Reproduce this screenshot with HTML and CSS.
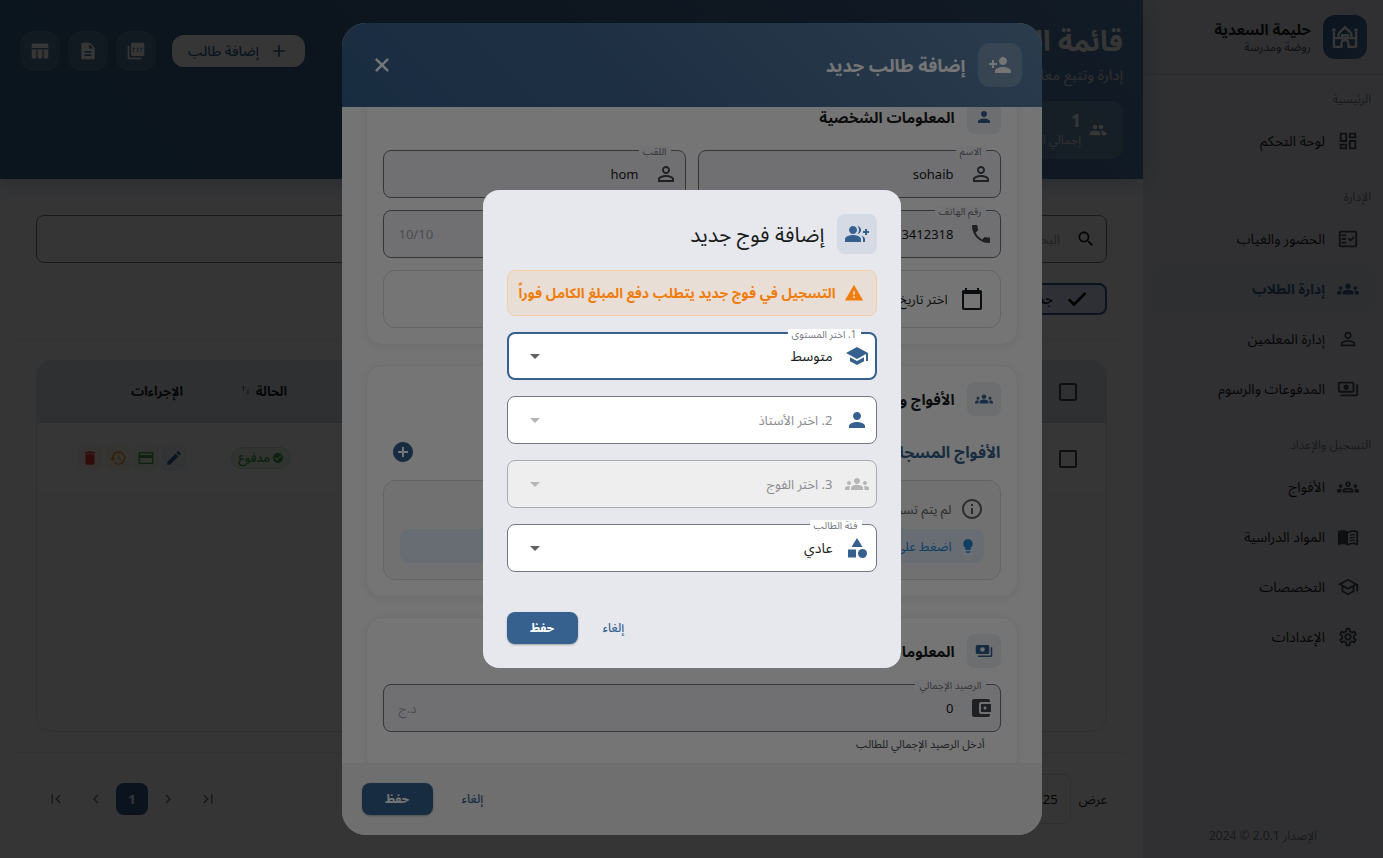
FILE: index.html
```html
<!DOCTYPE html>
<html lang="ar" dir="rtl">

<head>
  <meta charset="UTF-8">
  <meta name="viewport" content="width=device-width, initial-scale=1.0">
  <title>إدارة الطلاب</title>
  <link rel="stylesheet" href="styles.css">
</head>

<body>
  <!-- Icons -->
  <svg class="sprite" aria-hidden="true">
    <symbol id="i-person" viewBox="0 0 24 24"><path d="M12 12c2.21 0 4-1.79 4-4s-1.79-4-4-4-4 1.79-4 4 1.79 4 4 4zm0 2c-2.67 0-8 1.34-8 4v2h16v-2c0-2.66-5.33-4-8-4z"/></symbol>
    <symbol id="i-person-outline" viewBox="0 0 24 24"><path d="M12 5.9c1.16 0 2.1.94 2.1 2.1s-.94 2.1-2.1 2.1S9.9 9.16 9.9 8s.94-2.1 2.1-2.1m0 9c2.97 0 6.1 1.46 6.1 2.1v1.1H5.9V17c0-.64 3.13-2.1 6.1-2.1M12 4C9.79 4 8 5.79 8 8s1.79 4 4 4 4-1.79 4-4-1.79-4-4-4zm0 9c-2.67 0-8 1.34-8 4v3h16v-3c0-2.66-5.33-4-8-4z"/></symbol>
    <symbol id="i-person-add" viewBox="0 0 24 24"><path d="M15 12c2.21 0 4-1.79 4-4s-1.79-4-4-4-4 1.79-4 4 1.79 4 4 4zm-9-2V7H4v3H1v2h3v3h2v-3h3v-2H6zm9 4c-2.67 0-8 1.34-8 4v2h16v-2c0-2.66-5.33-4-8-4z"/></symbol>
    <symbol id="i-group-add" viewBox="0 0 24 24"><path d="M22 9V7h-2v2h-2v2h2v2h2v-2h2V9zM8 12c2.21 0 4-1.79 4-4s-1.79-4-4-4-4 1.79-4 4 1.79 4 4 4zm0 1c-2.67 0-8 1.34-8 4v3h16v-3c0-2.66-5.33-4-8-4zM12.51 4.05C13.43 5.11 14 6.49 14 8s-.57 2.89-1.49 3.95C14.47 11.7 16 10.04 16 8s-1.53-3.7-3.49-3.95zM16.53 13.83C17.42 14.66 18 15.7 18 17v3h2v-3c0-1.45-1.59-2.51-3.47-3.17z"/></symbol>
    <symbol id="i-people" viewBox="0 0 24 24"><path d="M16 11c1.66 0 2.99-1.34 2.99-3S17.66 5 16 5s-3 1.34-3 3 1.34 3 3 3zm-8 0c1.66 0 2.99-1.34 2.99-3S9.66 5 8 5 5 6.34 5 8s1.34 3 3 3zm0 2c-2.33 0-7 1.17-7 3.5V19h14v-2.5c0-2.33-4.67-3.5-7-3.5zm8 0c-.29 0-.62.02-.97.05 1.16.84 1.97 1.97 1.97 3.45V19h6v-2.5c0-2.33-4.67-3.5-7-3.5z"/></symbol>
    <symbol id="i-groups" viewBox="0 0 24 24"><path d="M12 12.75c1.63 0 3.07.39 4.24.9 1.08.48 1.76 1.56 1.76 2.73V18H6v-1.61c0-1.18.68-2.26 1.76-2.73 1.17-.52 2.61-.91 4.24-.91zM4 13c1.1 0 2-.9 2-2s-.9-2-2-2-2 .9-2 2 .9 2 2 2zm1.13 1.1c-.37-.06-.74-.1-1.13-.1-.99 0-1.93.21-2.78.58C.48 14.9 0 15.62 0 16.43V18h4.5v-1.61c0-.83.23-1.61.63-2.29zM20 13c1.1 0 2-.9 2-2s-.9-2-2-2-2 .9-2 2 .9 2 2 2zm4 3.43c0-.81-.48-1.53-1.22-1.85-.85-.37-1.79-.58-2.78-.58-.39 0-.76.04-1.13.1.4.68.63 1.46.63 2.29V18H24v-1.57zM12 6c1.66 0 3 1.34 3 3s-1.34 3-3 3-3-1.34-3-3 1.34-3 3-3z"/></symbol>
    <symbol id="i-groups-outline" viewBox="0 0 24 24"><path d="M4 13c1.1 0 2-.9 2-2s-.9-2-2-2-2 .9-2 2 .9 2 2 2zm1.13 1.1c-.37-.06-.74-.1-1.13-.1-.99 0-1.93.21-2.78.58C.48 14.9 0 15.62 0 16.43V18h4.5v-1.61c0-.83.23-1.61.63-2.29zM20 13c1.1 0 2-.9 2-2s-.9-2-2-2-2 .9-2 2 .9 2 2 2zm4 3.43c0-.81-.48-1.53-1.22-1.85-.85-.37-1.79-.58-2.78-.58-.39 0-.76.04-1.13.1.4.68.63 1.46.63 2.29V18H24v-1.57zm-7.76-2.78c-1.17-.52-2.61-.9-4.24-.9-1.63 0-3.07.39-4.24.9C6.68 14.13 6 15.21 6 16.39V18h12v-1.61c0-1.18-.68-2.26-1.76-2.74zM8.07 16c.09-.23.13-.39.91-.69.97-.38 1.99-.56 3.02-.56s2.05.18 3.02.56c.77.3.81.46.91.69H8.07zM12 8c.55 0 1 .45 1 1s-.45 1-1 1-1-.45-1-1 .45-1 1-1m0-2c-1.66 0-3 1.34-3 3s1.34 3 3 3 3-1.34 3-3-1.34-3-3-3z"/></symbol>
    <symbol id="i-warning" viewBox="0 0 24 24"><path d="M1 21h22L12 2 1 21zm12-3h-2v-2h2v2zm0-4h-2v-4h2v4z"/></symbol>
    <symbol id="i-school" viewBox="0 0 24 24"><path d="M5 13.18v4L12 21l7-3.82v-4L12 17l-7-3.82zM12 3 1 9l11 6 9-4.91V17h2V9L12 3z"/></symbol>
    <symbol id="i-school-outline" viewBox="0 0 24 24"><path d="M12 3 1 9l4 2.18v6L12 21l7-3.82v-6l2-1.09V17h2V9L12 3zm6.82 6L12 12.72 5.18 9 12 5.28 18.82 9zM17 15.99l-5 2.73-5-2.73v-3.72L12 15l5-2.73v3.72z"/></symbol>
    <symbol id="i-category" viewBox="0 0 24 24"><path d="m12 2-5.5 9h11zM3 13.5h8v8H3z"/><circle cx="17.5" cy="17.5" r="4.5"/></symbol>
    <symbol id="i-phone" viewBox="0 0 24 24"><path d="M6.62 10.79c1.44 2.83 3.76 5.14 6.59 6.59l2.2-2.2c.27-.27.67-.36 1.02-.24 1.12.37 2.33.57 3.57.57.55 0 1 .45 1 1V20c0 .55-.45 1-1 1-9.39 0-17-7.61-17-17 0-.55.45-1 1-1h3.5c.55 0 1 .45 1 1 0 1.25.2 2.45.57 3.57.11.35.03.74-.25 1.02l-2.2 2.2z"/></symbol>
    <symbol id="i-calendar" viewBox="0 0 24 24"><path d="M20 3h-1V1h-2v2H7V1H5v2H4c-1.1 0-2 .9-2 2v16c0 1.1.9 2 2 2h16c1.1 0 2-.9 2-2V5c0-1.1-.9-2-2-2zm0 18H4V7h16v14z"/></symbol>
    <symbol id="i-search" viewBox="0 0 24 24"><path d="M15.5 14h-.79l-.28-.27C15.41 12.59 16 11.11 16 9.5 16 5.91 13.09 3 9.5 3S3 5.91 3 9.5 5.91 16 9.5 16c1.61 0 3.09-.59 4.23-1.57l.27.28v.79l5 4.99L20.49 19l-4.99-5zm-6 0C7.01 14 5 11.99 5 9.5S7.01 5 9.5 5 14 7.01 14 9.5 11.99 14 9.5 14z"/></symbol>
    <symbol id="i-close" viewBox="0 0 24 24"><path d="M5.5 5.5l13 13m0-13l-13 13" fill="none" stroke="currentColor" stroke-width="3" stroke-linecap="round"/></symbol>
    <symbol id="i-add" viewBox="0 0 24 24"><path d="M19 13h-6v6h-2v-6H5v-2h6V5h2v6h6v2z"/></symbol>
    <symbol id="i-check" viewBox="0 0 24 24"><path d="M9 16.17 4.83 12l-1.42 1.41L9 19 21 7l-1.41-1.41z" stroke="currentColor"/></symbol>
    <symbol id="i-info" viewBox="0 0 24 24"><path d="M11 7h2v2h-2zm0 4h2v6h-2zm1-9C6.48 2 2 6.48 2 12s4.48 10 10 10 10-4.48 10-10S17.52 2 12 2zm0 18c-4.41 0-8-3.59-8-8s3.59-8 8-8 8 3.59 8 8-3.59 8-8 8z"/></symbol>
    <symbol id="i-bulb" viewBox="0 0 24 24"><path d="M9 21c0 .55.45 1 1 1h4c.55 0 1-.45 1-1v-1H9v1zm3-19C8.14 2 5 5.14 5 9c0 2.38 1.19 4.47 3 5.74V17c0 .55.45 1 1 1h6c.55 0 1-.45 1-1v-2.26c1.81-1.27 3-3.36 3-5.74 0-3.86-3.14-7-7-7z"/></symbol>
    <symbol id="i-payments" viewBox="0 0 24 24"><path d="M19 14V6c0-1.1-.9-2-2-2H3c-1.1 0-2 .9-2 2v8c0 1.1.9 2 2 2h14c1.1 0 2-.9 2-2zm-9-1c-1.66 0-3-1.34-3-3s1.34-3 3-3 3 1.34 3 3-1.34 3-3 3zm13-6v11c0 1.1-.9 2-2 2H4v-2h17V7h2z"/></symbol>
    <symbol id="i-payments-outline" viewBox="0 0 24 24"><path d="M19 14V6c0-1.1-.9-2-2-2H3c-1.1 0-2 .9-2 2v8c0 1.1.9 2 2 2h14c1.1 0 2-.9 2-2zm-2 0H3V6h14v8zm-7-7c-1.66 0-3 1.34-3 3s1.34 3 3 3 3-1.34 3-3-1.34-3-3-3zm13 0v11c0 1.1-.9 2-2 2H4v-2h17V7h2z"/></symbol>
    <symbol id="i-wallet" viewBox="0 0 24 24"><path d="M21 18v1c0 1.1-.9 2-2 2H5c-1.11 0-2-.9-2-2V5c0-1.1.89-2 2-2h14c1.1 0 2 .9 2 2v1h-9c-1.11 0-2 .9-2 2v8c0 1.1.89 2 2 2h9zm-9-2h10V8H12v8zm4-2.5c-.83 0-1.5-.67-1.5-1.5s.67-1.5 1.5-1.5 1.5.67 1.5 1.5-.67 1.5-1.5 1.5z"/></symbol>
    <symbol id="i-dashboard" viewBox="0 0 24 24"><path d="M19 5v2h-4V5h4M9 5v6H5V5h4m10 8v6h-4v-6h4M9 17v2H5v-2h4M21 3h-8v6h8V3zM11 3H3v10h8V3zm10 8h-8v10h8V11zm-10 4H3v6h8v-6z"/></symbol>
    <symbol id="i-fact-check" viewBox="0 0 24 24"><path d="M20 3H4c-1.1 0-2 .9-2 2v14c0 1.1.9 2 2 2h16c1.1 0 2-.9 2-2V5c0-1.1-.9-2-2-2zm0 16H4V5h16v14zM19.41 10.42 17.99 9l-3.17 3.17-1.41-1.42L12 12.16 14.82 15zM5 7h5v2H5zm0 4h5v2H5zm0 4h5v2H5z"/></symbol>
    <symbol id="i-book" viewBox="0 0 24 24"><path d="M21 5c-1.11-.35-2.33-.5-3.5-.5-1.95 0-4.05.4-5.5 1.5-1.45-1.1-3.55-1.5-5.5-1.5S2.45 4.9 1 6v14.65c0 .25.25.5.5.5.1 0 .15-.05.25-.05C3.1 20.45 5.05 20 6.5 20c1.95 0 4.05.4 5.5 1.5 1.35-.85 3.8-1.5 5.5-1.5 1.65 0 3.35.3 4.75 1.05.1.05.15.05.25.05.25 0 .5-.25.5-.5V6c-.6-.45-1.25-.75-2-1zm0 13.5c-1.1-.35-2.3-.5-3.5-.5-1.7 0-4.15.65-5.5 1.5V8c1.35-.85 3.8-1.5 5.5-1.5 1.2 0 2.4.15 3.5.5v11.5zM14 9.5c1.7-.8 3.7-.9 5.5-.6v1.3c-1.9-.3-3.9-.2-5.5.6zm0 3c1.7-.8 3.7-.9 5.5-.6v1.3c-1.9-.3-3.9-.2-5.5.6zm0 3c1.7-.8 3.7-.9 5.5-.6v1.3c-1.9-.3-3.9-.2-5.5.6z"/></symbol>
    <symbol id="i-settings" viewBox="0 0 24 24"><path d="M19.43 12.98c.04-.32.07-.64.07-.98 0-.34-.03-.66-.07-.98l2.11-1.65c.19-.15.24-.42.12-.64l-2-3.46c-.09-.16-.26-.25-.44-.25-.06 0-.12.01-.17.03l-2.49 1c-.52-.4-1.08-.73-1.69-.98l-.38-2.65C14.46 2.18 14.25 2 14 2h-4c-.25 0-.46.18-.49.42l-.38 2.65c-.61.25-1.17.59-1.69.98l-2.49-1c-.06-.02-.12-.03-.18-.03-.17 0-.34.09-.43.25l-2 3.46c-.13.22-.07.49.12.64l2.11 1.65c-.04.32-.07.65-.07.98 0 .33.03.66.07.98l-2.11 1.65c-.19.15-.24.42-.12.64l2 3.46c.09.16.26.25.44.25.06 0 .12-.01.17-.03l2.49-1c.52.4 1.08.73 1.69.98l.38 2.65c.03.24.24.42.49.42h4c.25 0 .46-.18.49-.42l.38-2.65c.61-.25 1.17-.59 1.69-.98l2.49 1c.06.02.12.03.18.03.17 0 .34-.09.43-.25l2-3.46c.12-.22.07-.49-.12-.64l-2.11-1.65zm-1.98-1.71c.04.31.05.52.05.73 0 .21-.02.43-.05.73l-.14 1.13.89.7 1.08.84-.7 1.21-1.27-.51-1.04-.42-.9.68c-.43.32-.84.56-1.25.73l-1.06.43-.16 1.13-.2 1.35h-1.4l-.19-1.35-.16-1.13-1.06-.43c-.43-.18-.83-.41-1.23-.71l-.91-.7-1.06.43-1.27.51-.7-1.21 1.08-.84.89-.7-.14-1.13c-.03-.31-.05-.54-.05-.74s.02-.43.05-.73l.14-1.13-.89-.7-1.08-.84.7-1.21 1.27.51 1.04.42.9-.68c.43-.32.84-.56 1.25-.73l1.06-.43.16-1.13.2-1.35h1.39l.19 1.35.16 1.13 1.06.43c.43.18.83.41 1.23.71l.91.7 1.06-.43 1.27-.51.7 1.21-1.07.85-.89.7.14 1.13zM12 8c-2.21 0-4 1.79-4 4s1.79 4 4 4 4-1.79 4-4-1.79-4-4-4zm0 6c-1.1 0-2-.9-2-2s.9-2 2-2 2 .9 2 2-.9 2-2 2z"/></symbol>
    <symbol id="i-mosque" viewBox="0 0 24 24"><path d="M2.5 21V7.5M21.5 21V7.5M2.5 20.5h6.5v-3c0-1.7 1.3-2.8 3-2.8s3 1.1 3 2.8v3h6.5M2.500 13h19M6.500 13V9.500C7.500 6.500 10.500 6 12 3.500c1.500 2.500 4.500 3 5.500 6V13M9.500 13v-2.500h5V13" fill="none" stroke="currentColor" stroke-width="2" stroke-linejoin="round"/><circle cx="2.500" cy="6" r="1.600"/><circle cx="21.500" cy="6" r="1.600"/></symbol>
    <symbol id="i-pdf" viewBox="0 0 24 24"><path fill-rule="evenodd" d="M20 2H8c-1.1 0-2 .9-2 2v12c0 1.1.9 2 2 2h12c1.1 0 2-.9 2-2V4c0-1.1-.9-2-2-2zM8 8h3v2H8zm5 0h2v2h-2zm4 0h3v2h-3zM8 11h1.5v2H8zm5 0h2v2h-2zm4 0h1.5v2H17zM4 6H2v14c0 1.1.9 2 2 2h14v-2H4V6z"/></symbol>
    <symbol id="i-doc" viewBox="0 0 24 24"><path d="M14 2H6c-1.1 0-1.99.9-1.99 2L4 20c0 1.1.89 2 1.99 2H18c1.1 0 2-.9 2-2V8l-6-6zm2 16H8v-2h8v2zm0-4H8v-2h8v2zm-3-5V3.5L18.5 9H13z"/></symbol>
    <symbol id="i-table" viewBox="0 0 24 24"><path d="M9 10h6v11H9zM16.5 21H20c1.1 0 2-.9 2-2v-9h-5.5v11zM20 3H4c-1.1 0-2 .9-2 2v3.5h20V5c0-1.1-.9-2-2-2zM2 19c0 1.1.9 2 2 2h3.5V10H2v9z"/></symbol>
    <symbol id="i-delete" viewBox="0 0 24 24"><path d="M6 19c0 1.1.9 2 2 2h8c1.1 0 2-.9 2-2V7H6v12zM19 4h-3.5l-1-1h-5l-1 1H5v2h14V4z"/></symbol>
    <symbol id="i-history" viewBox="0 0 24 24"><path d="M13 3c-4.97 0-9 4.03-9 9H1l3.89 3.89.07.14L9 12H6c0-3.87 3.13-7 7-7s7 3.13 7 7-3.13 7-7 7c-1.93 0-3.68-.79-4.94-2.06l-1.42 1.42C8.27 19.99 10.51 21 13 21c4.97 0 9-4.03 9-9s-4.03-9-9-9zm-1 5v5l4.28 2.54.72-1.21-3.5-2.08V8H12z"/></symbol>
    <symbol id="i-card" viewBox="0 0 24 24"><path d="M20 4H4c-1.11 0-1.99.89-1.99 2L2 18c0 1.11.89 2 2 2h16c1.11 0 2-.89 2-2V6c0-1.11-.89-2-2-2zm0 14H4v-6h16v6zm0-10H4V6h16v2z"/></symbol>
    <symbol id="i-edit" viewBox="0 0 24 24"><path d="M3 17.25V21h3.75L17.81 9.94l-3.75-3.75L3 17.25zM20.71 7.04c.39-.39.39-1.02 0-1.41l-2.34-2.34c-.39-.39-1.02-.39-1.41 0l-1.83 1.83 3.75 3.75 1.83-1.83z"/></symbol>
    <symbol id="i-check-circle" viewBox="0 0 24 24"><path d="M12 2C6.48 2 2 6.48 2 12s4.48 10 10 10 10-4.48 10-10S17.52 2 12 2zm-2 15-5-5 1.41-1.41L10 14.17l7.59-7.59L19 8l-9 9z"/></symbol>
    <symbol id="i-add-circle" viewBox="0 0 24 24"><path d="M12 2C6.48 2 2 6.48 2 12s4.48 10 10 10 10-4.48 10-10S17.52 2 12 2zm5 11h-4v4h-2v-4H7v-2h4V7h2v4h4v2z"/></symbol>
    <symbol id="i-left" viewBox="0 0 24 24"><path d="M15.41 7.41 14 6l-6 6 6 6 1.41-1.41L10.83 12z"/></symbol>
    <symbol id="i-right" viewBox="0 0 24 24"><path d="M10 6 8.59 7.41 13.17 12l-4.58 4.59L10 18l6-6z"/></symbol>
    <symbol id="i-first" viewBox="0 0 24 24"><path d="M18.41 16.59 13.82 12l4.59-4.59L17 6l-6 6 6 6zM6 6h2v12H6z"/></symbol>
    <symbol id="i-last" viewBox="0 0 24 24"><path d="M5.59 7.41 10.18 12l-4.59 4.59L7 18l6-6-6-6zM16 6h2v12h-2z"/></symbol>
    <symbol id="i-drop" viewBox="0 0 24 24"><path d="m7 10 5 5 5-5z"/></symbol>
    <symbol id="i-sort" viewBox="0 0 24 24"><path d="M7 14V4M4 7l3-3 3 3M16 10v10m-3-3 3 3 3-3" fill="none" stroke="currentColor" stroke-width="2"/></symbol>
  </svg>

  <div class="app">
    <!-- Sidebar -->
    <aside class="sidebar">
      <div class="brand">
        <span class="brand-logo"><svg class="icon icon-28"><use href="#i-mosque"/></svg></span>
        <div>
          <div class="brand-name">حليمة السعدية</div>
          <div class="brand-sub">روضة ومدرسة</div>
        </div>
      </div>
      <nav class="nav">
        <div class="nav-title">الرئيسية</div>
        <a class="nav-item" href="#"><svg class="icon icon-22"><use href="#i-dashboard"/></svg>لوحة التحكم</a>
        <div class="nav-title">الإدارة</div>
        <a class="nav-item" href="#"><svg class="icon icon-22"><use href="#i-fact-check"/></svg>الحضور والغياب</a>
        <a class="nav-item active" href="#"><svg class="icon icon-22"><use href="#i-groups"/></svg>إدارة الطلاب</a>
        <a class="nav-item" href="#"><svg class="icon icon-22"><use href="#i-person-outline"/></svg>إدارة المعلمين</a>
        <a class="nav-item" href="#"><svg class="icon icon-22"><use href="#i-payments-outline"/></svg>المدفوعات والرسوم</a>
        <div class="nav-title">التسجيل والإعداد</div>
        <a class="nav-item" href="#"><svg class="icon icon-22"><use href="#i-groups-outline"/></svg>الأفواج</a>
        <a class="nav-item" href="#"><svg class="icon icon-22"><use href="#i-book"/></svg>المواد الدراسية</a>
        <a class="nav-item" href="#"><svg class="icon icon-22"><use href="#i-school-outline"/></svg>التخصصات</a>
        <a class="nav-item" href="#"><svg class="icon icon-22"><use href="#i-settings"/></svg>الإعدادات</a>
      </nav>
      <div class="version">الإصدار 2.0.1 © 2024</div>
    </aside>

    <main class="main">
      <header class="hero">
        <div>
          <h1 class="hero-title">قائمة الطلاب</h1>
          <p class="hero-sub">إدارة وتتبع معلومات الطلاب</p>
          <div class="stat">
            <svg class="icon icon-18"><use href="#i-people"/></svg>
            <div>
              <div class="stat-value">1</div>
              <div class="stat-label">إجمالي الطلاب</div>
            </div>
          </div>
        </div>
        <div class="hero-actions">
          <button class="hero-add" type="button"><svg class="icon icon-20"><use href="#i-add"/></svg>إضافة طالب</button>
          <button class="hero-btn" type="button" aria-label="PDF"><svg class="icon icon-20"><use href="#i-pdf"/></svg></button>
          <button class="hero-btn" type="button" aria-label="مستند"><svg class="icon icon-20"><use href="#i-doc"/></svg></button>
          <button class="hero-btn" type="button" aria-label="جدول"><svg class="icon icon-20"><use href="#i-table"/></svg></button>
        </div>
      </header>

      <section class="panel">
        <div class="filters">
          <div class="search">
            <svg class="icon icon-20"><use href="#i-search"/></svg>
            <input class="search-input" type="search" placeholder="البحث عن طالب" aria-label="البحث">
          </div>
          <button class="filter-chip" type="button"><svg class="icon icon-24"><use href="#i-check"/></svg>جديد</button>
        </div>

        <div class="table-area">
          <div class="table-box">
            <table class="table">
              <thead>
                <tr>
                  <th class="col-check"><input class="check" type="checkbox" aria-label="تحديد الكل"></th>
                  <th>الاسم</th>
                  <th class="col-status">الحالة <svg class="icon icon-12"><use href="#i-sort"/></svg></th>
                  <th class="col-actions">الإجراءات</th>
                </tr>
              </thead>
              <tbody>
                <tr>
                  <td class="col-check"><input class="check" type="checkbox" aria-label="تحديد"></td>
                  <td></td>
                  <td class="col-status"><span class="badge"><svg class="icon icon-12"><use href="#i-check-circle"/></svg>مدفوع</span></td>
                  <td class="col-actions">
                    <div class="row-actions">
                      <button class="row-btn edit" type="button" aria-label="تعديل"><svg class="icon icon-18"><use href="#i-edit"/></svg></button>
                      <button class="row-btn pay" type="button" aria-label="دفع"><svg class="icon icon-18"><use href="#i-card"/></svg></button>
                      <button class="row-btn log" type="button" aria-label="السجل"><svg class="icon icon-18"><use href="#i-history"/></svg></button>
                      <button class="row-btn del" type="button" aria-label="حذف"><svg class="icon icon-18"><use href="#i-delete"/></svg></button>
                    </div>
                  </td>
                </tr>
              </tbody>
            </table>
          </div>
        </div>

        <footer class="pager">
          <div class="page-size">
            <label for="pageSize">عرض</label>
            <select class="page-select" id="pageSize"><option>25</option></select>
          </div>
          <div class="pages">
            <button class="page-btn" type="button" aria-label="الأولى"><svg class="icon icon-18"><use href="#i-first"/></svg></button>
            <button class="page-btn" type="button" aria-label="السابقة"><svg class="icon icon-18"><use href="#i-left"/></svg></button>
            <button class="page-current" type="button">1</button>
            <button class="page-btn" type="button" aria-label="التالية"><svg class="icon icon-18"><use href="#i-right"/></svg></button>
            <button class="page-btn" type="button" aria-label="الأخيرة"><svg class="icon icon-18"><use href="#i-last"/></svg></button>
          </div>
        </footer>
      </section>
    </main>
  </div>

  <!-- Add student -->
  <div class="overlay">
    <div class="student-dialog" role="dialog" aria-labelledby="studentTitle">
      <header class="student-head">
        <span class="student-icon"><svg class="icon icon-24"><use href="#i-person-add"/></svg></span>
        <h2 class="student-title" id="studentTitle">إضافة طالب جديد</h2>
        <button class="close-btn" type="button" aria-label="إغلاق"><svg class="icon icon-20"><use href="#i-close"/></svg></button>
      </header>

      <div class="student-body" id="studentBody">
        <section class="card">
          <h3 class="card-head"><span class="card-icon"><svg class="icon icon-18"><use href="#i-person"/></svg></span>المعلومات الشخصية</h3>
          <div class="fields">
            <div class="field tinted">
              <label class="field-label" for="firstName">الاسم</label>
              <svg class="icon icon-24"><use href="#i-person-outline"/></svg>
              <input class="field-input" id="firstName" type="text" value="sohaib">
            </div>
            <div class="field tinted">
              <label class="field-label" for="lastName">اللقب</label>
              <svg class="icon icon-24"><use href="#i-person-outline"/></svg>
              <input class="field-input" id="lastName" type="text" value="hom">
            </div>
            <div class="field tinted wide">
              <label class="field-label" for="phone">رقم الهاتف</label>
              <svg class="icon icon-24"><use href="#i-phone"/></svg>
              <input class="field-input" id="phone" type="text" value="0553412318">
              <span class="field-suffix">10/10</span>
            </div>
            <button class="date-btn wide" type="button"><svg class="icon icon-24"><use href="#i-calendar"/></svg>اختر تاريخ الميلاد</button>
          </div>
        </section>

        <section class="card">
          <h3 class="card-head"><span class="card-icon"><svg class="icon icon-18"><use href="#i-groups"/></svg></span>الأفواج والتسجيل</h3>
          <div class="sub-head">
            <h4 class="sub-title">الأفواج المسجلة</h4>
            <button class="add-group" type="button" aria-label="إضافة فوج"><svg class="icon icon-24"><use href="#i-add-circle"/></svg></button>
          </div>
          <div class="empty-box">
            <div class="empty-row"><svg class="icon icon-24"><use href="#i-info"/></svg>لم يتم تسجيل الطالب</div>
            <div class="hint"><svg class="icon icon-16"><use href="#i-bulb"/></svg>اضغط على زر الإضافة</div>
          </div>
        </section>

        <section class="card">
          <h3 class="card-head"><span class="card-icon"><svg class="icon icon-18"><use href="#i-payments"/></svg></span>المعلومات المالية</h3>
          <div class="field tinted">
            <label class="field-label" for="balance">الرصيد الإجمالي</label>
            <svg class="icon icon-24"><use href="#i-wallet"/></svg>
            <input class="field-input" id="balance" type="text" value="0">
            <span class="field-suffix">د.ج</span>
          </div>
          <p class="helper">أدخل الرصيد الإجمالي للطالب</p>
        </section>
      </div>

      <footer class="student-foot">
        <button class="btn-text" type="button">إلغاء</button>
        <button class="btn-primary" type="button">حفظ</button>
      </footer>
    </div>
  </div>

  <!-- Add group -->
  <div class="overlay">
    <div class="group-dialog" role="dialog" aria-labelledby="groupTitle">
      <header class="group-head">
        <span class="group-icon"><svg class="icon icon-24"><use href="#i-group-add"/></svg></span>
        <h2 class="group-title" id="groupTitle">إضافة فوج جديد</h2>
      </header>
      <div class="alert"><svg class="icon icon-20"><use href="#i-warning"/></svg>التسجيل في فوج جديد يتطلب دفع المبلغ الكامل فوراً</div>

      <div class="field white focused">
        <label class="field-label" for="level">1. اختر المستوى</label>
        <svg class="icon icon-24"><use href="#i-school"/></svg>
        <select class="field-input" id="level"><option>متوسط</option></select>
        <svg class="icon icon-24 arrow"><use href="#i-drop"/></svg>
      </div>
      <div class="field white empty">
        <svg class="icon icon-24"><use href="#i-person"/></svg>
        <select class="field-input" aria-label="الأستاذ"><option>2. اختر الأستاذ</option></select>
        <svg class="icon icon-24 arrow"><use href="#i-drop"/></svg>
      </div>
      <div class="field disabled empty">
        <svg class="icon icon-24"><use href="#i-groups"/></svg>
        <select class="field-input" aria-label="الفوج" disabled><option>3. اختر الفوج</option></select>
        <svg class="icon icon-24 arrow"><use href="#i-drop"/></svg>
      </div>
      <div class="field white">
        <label class="field-label" for="category">فئة الطالب</label>
        <svg class="icon icon-24"><use href="#i-category"/></svg>
        <select class="field-input" id="category"><option>عادي</option></select>
        <svg class="icon icon-24 arrow"><use href="#i-drop"/></svg>
      </div>

      <footer class="group-foot">
        <button class="btn-text" type="button">إلغاء</button>
        <button class="btn-primary" type="button">حفظ</button>
      </footer>
    </div>
  </div>

  <script>
    // the form opens slightly scrolled
    document.getElementById('studentBody').scrollTop = 48;
  </script>
</body>

</html>
```
FILE: styles.css
```css
:root {
  --primary: #36618e;
  --text: #191c20;
  --muted: #73777f;
}

* {
  box-sizing: border-box;
}

body {
  margin: 0;
  height: 100vh;
  overflow: hidden;
  background: #f8f9ff;
  color: var(--text);
  font-family: 'Noto Sans', 'Noto Sans Arabic', 'DejaVu Sans', sans-serif;
  font-size: 13px;
  line-height: 20px;
}

button,
input,
select {
  font: inherit;
  color: inherit;
}

button {
  cursor: pointer;
}

h1,
h2,
h3,
h4,
p {
  margin: 0;
}

/* Icons */
.sprite {
  display: none;
}

.icon {
  fill: currentColor;
  flex: none;
}

.icon-12 { width: 12px; height: 12px; }
.icon-16 { width: 16px; height: 16px; }
.icon-18 { width: 18px; height: 18px; }
.icon-20 { width: 20px; height: 20px; }
.icon-22 { width: 22px; height: 22px; }
.icon-24 { width: 24px; height: 24px; }
.icon-28 { width: 28px; height: 28px; }

.app {
  display: flex;
  height: 100%;
}

/* Sidebar */
.sidebar {
  width: 240px;
  flex: none;
  display: flex;
  flex-direction: column;
  background: #e0e3ea;
}

.brand {
  display: flex;
  align-items: center;
  gap: 12px;
  height: 75px;
  padding: 0 16px;
  border-bottom: 1px solid #c8ccd4;
}

.brand-logo {
  width: 44px;
  height: 44px;
  border-radius: 12px;
  display: grid;
  place-items: center;
  background: linear-gradient(135deg, #36618e, #4a77a8);
  color: #fff;
}

.brand-name {
  font-size: 15px;
  font-weight: 700;
}

.brand-sub {
  font-size: 12px;
  line-height: 16px;
  color: #43474e;
}

.nav {
  flex: 1;
  padding-top: 9px;
}

.nav-title {
  height: 30px;
  padding: 0 12px;
  line-height: 30px;
  font-size: 12px;
  letter-spacing: 2px;
  color: var(--muted);
}

.nav-item + .nav-title {
  margin-top: 18px;
}

.nav-item {
  display: flex;
  align-items: center;
  gap: 12px;
  height: 46px;
  margin: 4px 8px;
  padding: 0 16px;
  border-radius: 12px;
  font-size: 14px;
  color: var(--text);
  text-decoration: none;
}

.nav-item .icon {
  color: #43474e;
}

.nav-item.active,
.nav-item.active .icon {
  color: var(--primary);
}

.nav-item.active {
  background: #d5dbe6;
  font-weight: 700;
}

.version {
  padding-bottom: 12px;
  text-align: center;
  font-size: 12px;
  color: var(--muted);
}

/* Main */
.main {
  flex: 1;
  min-width: 0;
  display: flex;
  flex-direction: column;
}

.hero {
  display: flex;
  justify-content: space-between;
  align-items: flex-start;
  height: 179px;
  padding: 20px;
  background: linear-gradient(225deg, #5482b2, #3f6490 50%, #34638a);
  box-shadow: 0 4px 20px #36618e4d;
  color: #fff;
}

.hero-title {
  font-size: 28px;
  line-height: 40px;
}

.hero-sub {
  font-size: 15px;
  line-height: 28px;
  opacity: .75;
}

.stat {
  display: flex;
  align-items: center;
  gap: 8px;
  width: 160px;
  height: 58px;
  margin-top: 13px;
  padding: 0 16px;
  border-radius: 12px;
  background: #ffffff26;
}

.stat-value {
  font-size: 18px;
  font-weight: 700;
}

.stat-label {
  font-size: 12px;
  opacity: .8;
}

.hero-actions {
  display: flex;
  align-items: center;
  gap: 8px;
  margin-top: 11px;
}

.hero-add {
  display: flex;
  align-items: center;
  gap: 10px;
  height: 32px;
  margin-left: 8px;
  padding: 0 16px;
  border: 0;
  border-radius: 12px;
  background: #fff;
  color: var(--primary);
  font-size: 14px;
  font-weight: 500;
}

.hero-btn {
  width: 40px;
  height: 40px;
  display: grid;
  place-items: center;
  padding: 0;
  border: 0;
  border-radius: 14px;
  background: #ffffff26;
  color: #fff;
}

.panel {
  flex: 1;
  display: flex;
  flex-direction: column;
  margin: 16px 16px 14px;
  border-radius: 16px;
}

.filters {
  padding: 20px 20px 24px;
  border-bottom: 1px solid #e9ebf2;
}

.search {
  display: flex;
  align-items: center;
  gap: 14px;
  height: 48px;
  padding: 0 10px;
  border: 1px solid var(--muted);
  border-radius: 8px;
}

.search-input {
  flex: 1;
  border: 0;
  background: none;
}

.search-input::placeholder {
  color: #9a9da5;
}

.filter-chip {
  display: flex;
  align-items: center;
  gap: 12px;
  height: 32px;
  margin-top: 20px;
  padding: 0 16px;
  border: 2px solid var(--primary);
  border-radius: 8px;
  background: #d7e3f8;
  font-weight: 600;
}

.filter-chip .icon {
  color: #000;
}

.table-area {
  flex: 1;
  padding: 20px;
  border-bottom: 1px solid #e9ebf2;
}

.table-box {
  height: 100%;
  overflow: hidden;
  border: 1px solid #dcdfe8;
  border-radius: 16px;
}

.table {
  width: 100%;
  border-collapse: collapse;
  table-layout: fixed;
  text-align: right;
}

.table th {
  height: 61px;
  padding: 0 20px;
  background: #dfe3ea;
  border-bottom: 1px solid #d2d6de;
}

.table td {
  height: 71px;
  padding: 0 16px;
  background: #fffefd;
}

.table .col-check {
  width: 76px;
  text-align: center;
}

.col-status { width: 104px; }
.col-actions { width: 166px; }

.col-status > .icon {
  color: var(--muted);
}

.check {
  appearance: none;
  display: inline-block;
  width: 18px;
  height: 18px;
  margin: 0;
  border: 2px solid #43474e;
  border-radius: 2px;
  vertical-align: middle;
}

.badge {
  display: inline-flex;
  align-items: center;
  gap: 2px;
  height: 22px;
  padding: 0 6px;
  border: 1px solid #c4e4c7;
  border-radius: 11px;
  background: #edf6ec;
  color: #43a047;
  font-size: 12px;
  font-weight: 600;
}

.row-actions {
  display: flex;
  gap: 2px;
}

.row-btn {
  width: 26px;
  height: 26px;
  display: grid;
  place-items: center;
  padding: 0;
  border: 0;
  border-radius: 6px;
}

.row-btn.edit { color: #2a6399; background: #f1f4f9; }
.row-btn.pay { color: #43a047; background: #f1f7f0; }
.row-btn.log { color: #f0952a; background: #fdf3e8; }
.row-btn.del { color: #e53935; background: #fceeee; }

.pager {
  display: flex;
  justify-content: space-between;
  align-items: center;
  height: 91px;
  padding: 0 20px;
}

.page-size {
  display: flex;
  align-items: center;
  gap: 8px;
}

.page-select {
  appearance: none;
  width: 90px;
  height: 50px;
  padding: 0 12px;
  border: 1px solid #dcdfe8;
  border-radius: 8px;
  background: none;
}

.pages {
  display: flex;
  align-items: center;
  direction: ltr;
}

.page-btn {
  width: 40px;
  height: 40px;
  display: grid;
  place-items: center;
  padding: 0;
  border: 0;
  background: none;
  color: var(--muted);
}

.page-current {
  width: 32px;
  height: 32px;
  padding: 0;
  border: 0;
  border-radius: 8px;
  background: var(--primary);
  color: #fff;
  font-weight: 700;
}

/* Dialogs */
.overlay {
  position: fixed;
  inset: 0;
  display: flex;
  align-items: center;
  justify-content: center;
  padding: 23px;
  background: rgba(0, 0, 0, .54);
}

.student-dialog {
  width: 700px;
  height: 100%;
  display: flex;
  flex-direction: column;
  overflow: hidden;
  border-radius: 24px;
  background: #fcfcfe;
}

.student-head {
  flex: none;
  display: flex;
  align-items: center;
  gap: 12px;
  height: 84px;
  padding: 0 20px;
  background: linear-gradient(225deg, #5e82a8, #426894 60%, #36618e);
  color: #fff;
}

.student-icon {
  width: 44px;
  height: 44px;
  display: grid;
  place-items: center;
  border-radius: 12px;
  background: #ffffff33;
}

.student-title {
  flex: 1;
  font-size: 18px;
  line-height: 28px;
}

.close-btn {
  width: 40px;
  height: 40px;
  display: grid;
  place-items: center;
  padding: 0;
  border: 0;
  background: none;
}

.student-body {
  flex: 1;
  min-height: 0;
  overflow-y: auto;
  scrollbar-width: none;
  padding: 24px;
  display: flex;
  flex-direction: column;
  gap: 20px;
}

.card {
  flex: none;
  padding: 16px;
  border: 1px solid #f0f0f3;
  border-radius: 16px;
  background: #fff;
  box-shadow: 0 2px 8px #0000000f;
}

.card-head {
  display: flex;
  align-items: center;
  gap: 12px;
  margin-bottom: 16px;
  font-size: 15px;
}

.card-icon {
  width: 34px;
  height: 34px;
  display: grid;
  place-items: center;
  border-radius: 8px;
  background: #ebeff4;
  color: var(--primary);
}

.fields {
  display: grid;
  grid-template-columns: 1fr 1fr;
  gap: 12px;
}

.wide {
  grid-column: 1 / -1;
}

/* Form fields */
.field {
  position: relative;
  display: flex;
  align-items: center;
  gap: 12px;
  height: 48px;
  padding: 0 7px 0 15px;
  border: 1px solid var(--muted);
  border-radius: 8px;
}

.field-label {
  position: absolute;
  top: -5px;
  right: 14px;
  padding: 0 4px;
  font-size: 10px;
  line-height: 10px;
  color: #73777f;
}

.field-input {
  flex: 1;
  min-width: 0;
  height: 100%;
  padding: 0;
  border: 0;
  outline: 0;
  background: none;
  appearance: none;
  opacity: 1;
}

.field-suffix {
  font-size: 13px;
  color: #a5a7ad;
}

.tinted {
  gap: 15px;
  background: #f3f3fa;
}

.tinted > .icon {
  color: #43474e;
}

.tinted .field-label {
  background: #f9f9fc;
}

.white,
.white .field-label {
  background: #fff;
}

.white > .icon {
  color: var(--primary);
}

.white .field-input {
  font-size: 14px;
}

.focused {
  padding: 0 6px 0 14px;
  border: 2px solid var(--primary);
}

.empty .field-input {
  font-size: 13px;
  color: #8b8b8f;
}

.disabled {
  border-color: #a9abb0;
  background: #eee;
}

.disabled > .icon {
  color: #b5b5b5;
}

.field > .arrow {
  color: #616161;
}

.empty > .arrow {
  color: #b5b5b5;
}

.date-btn {
  display: flex;
  align-items: center;
  gap: 12px;
  height: 58px;
  padding: 0 16px;
  border: 1px solid #dcdce0;
  border-radius: 12px;
  background: #fff;
}

.sub-head {
  display: flex;
  align-items: center;
  justify-content: space-between;
  height: 40px;
  margin-bottom: 8px;
}

.sub-title {
  font-size: 16px;
  color: var(--primary);
}

.add-group {
  width: 40px;
  height: 40px;
  display: grid;
  place-items: center;
  padding: 0;
  border: 0;
  background: none;
  color: var(--primary);
}

.empty-box {
  padding: 16px;
  border: 1px solid #dcdce0;
  border-radius: 12px;
  background: #f7f7f8;
}

.empty-row {
  display: flex;
  align-items: center;
  gap: 8px;
  height: 24px;
  margin-bottom: 8px;
  color: #616161;
}

.hint {
  display: flex;
  align-items: center;
  gap: 8px;
  height: 34px;
  padding: 0 8px;
  border-radius: 8px;
  background: #e0eefa;
  color: #2488d8;
}

.helper {
  padding: 4px 16px;
  font-size: 11px;
  line-height: 16px;
  color: #43474e;
}

.student-foot {
  flex: none;
  display: flex;
  justify-content: flex-end;
  align-items: center;
  gap: 8px;
  height: 72px;
  padding: 0 20px;
  background: #f1f1f3;
}

.btn-text,
.btn-primary {
  height: 32px;
  padding: 0;
  border: 0;
  border-radius: 8px;
  font-size: 12px;
}

.btn-text {
  width: 64px;
  background: none;
  color: var(--primary);
  font-weight: 500;
}

.btn-primary {
  width: 71px;
  background: var(--primary);
  box-shadow: 0 1px 2px #0000004d;
  color: #fff;
  font-weight: 700;
}

/* Group dialog */
.group-dialog {
  width: 418px;
  display: flex;
  flex-direction: column;
  gap: 16px;
  padding: 24px;
  border-radius: 16px;
  background: #e6e8ee;
}

.group-head {
  display: flex;
  align-items: center;
  gap: 12px;
}

.group-icon {
  width: 40px;
  height: 40px;
  display: grid;
  place-items: center;
  border-radius: 8px;
  background: #d5dae5;
  color: var(--primary);
}

.group-title {
  font-size: 21px;
  line-height: 32px;
  font-weight: 400;
}

.alert {
  display: flex;
  align-items: center;
  gap: 8px;
  height: 46px;
  padding: 0 12px;
  border: 1px solid #f3cfa2;
  border-radius: 8px;
  background: #e9ded6;
  color: #ef7d0c;
  font-size: 14px;
  font-weight: 700;
  white-space: nowrap;
}

.group-foot {
  display: flex;
  justify-content: flex-end;
  gap: 4px;
  margin-top: 24px;
}
```
